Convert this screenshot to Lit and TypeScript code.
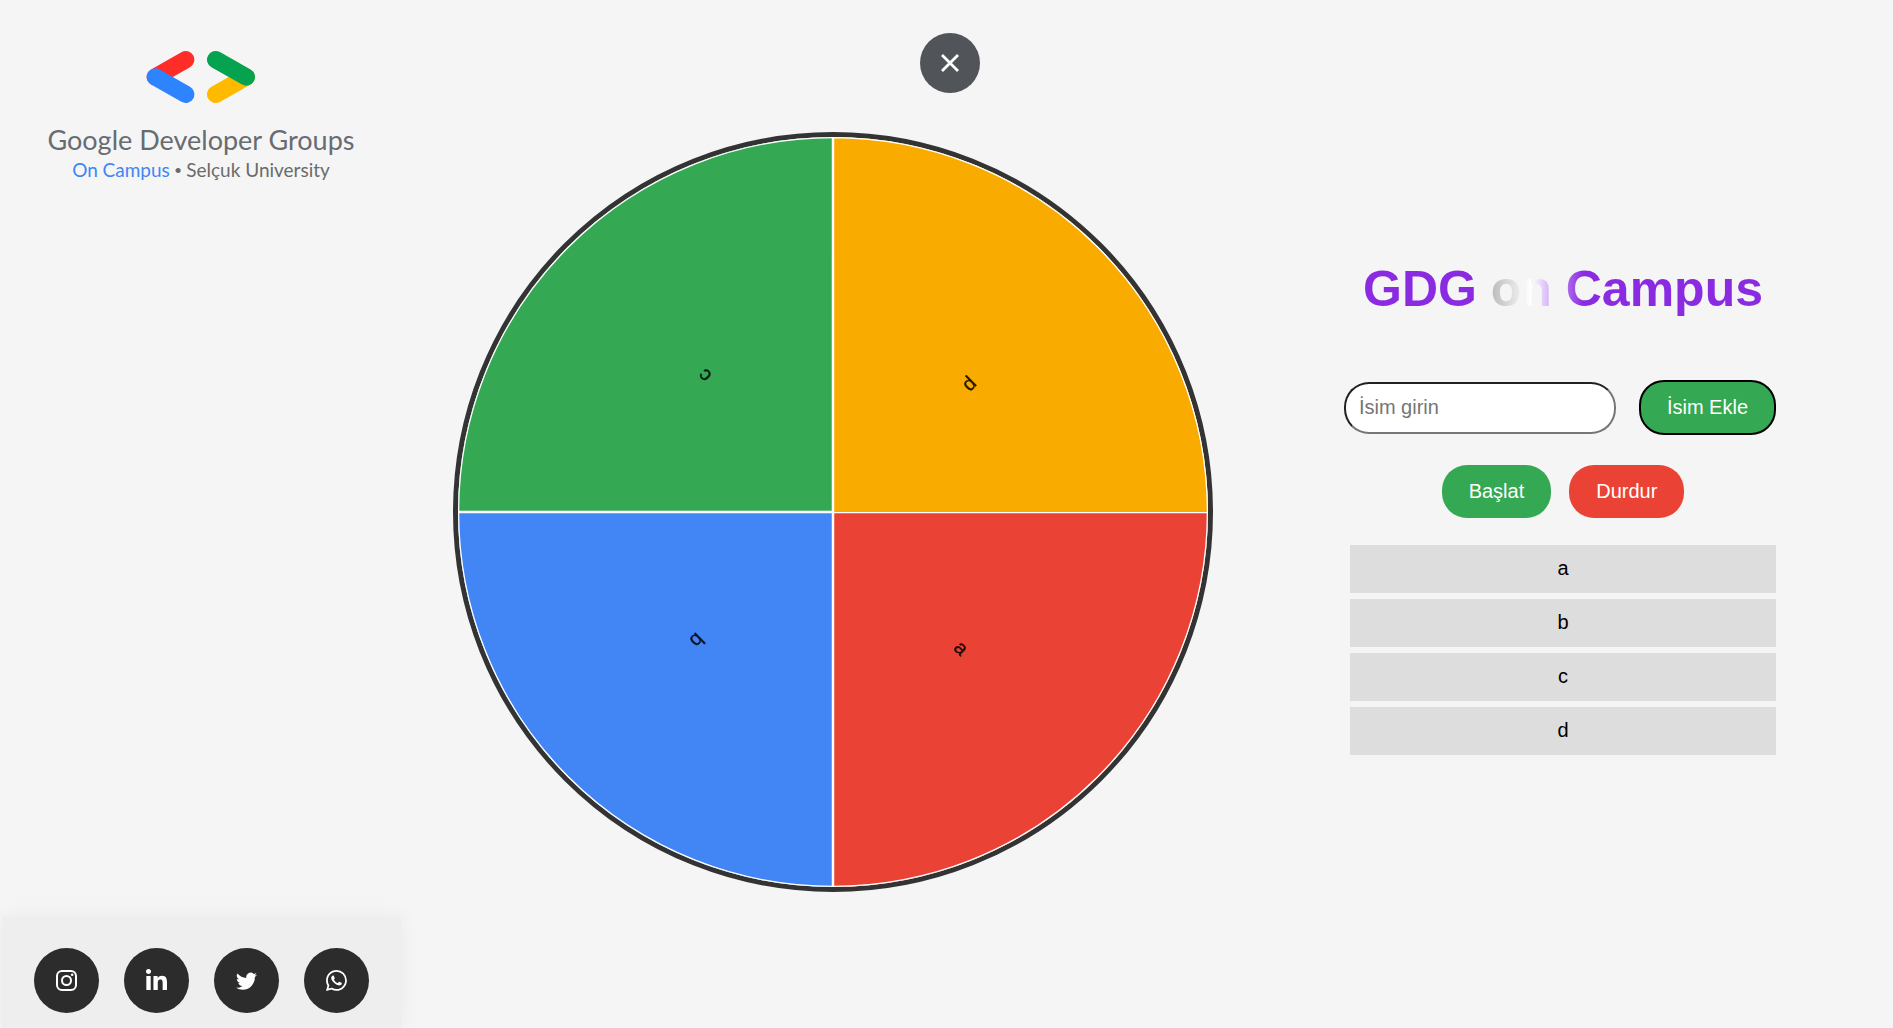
import { LitElement, html, css, svg } from "lit";
import { customElement, property, state } from "lit/decorators.js";

const SLICE_COLORS = ["#ea4335", "#4285f4", "#34a853", "#f9ab00"];

/** Round wheel with one equal slice for each name. */
@customElement("name-wheel")
export class NameWheel extends LitElement {
  @property({ attribute: false }) names: string[] = [];

  static styles = css`
    :host {
      display: block;
    }
    .wheel {
      display: block;
      box-sizing: border-box;
      width: 100%;
      aspect-ratio: 1;
      border: 5px solid #333;
      border-radius: 50%;
      overflow: hidden;
    }
    .edge {
      fill: none;
      stroke: #fff;
      stroke-width: 2.5;
    }
    .label {
      font-family: "Liberation Sans", Arial, sans-serif;
      font-size: 20px;
      text-anchor: middle;
      fill: #000;
      stroke: #000;
      stroke-width: 0.4;
      opacity: 0.85;
    }
  `;

  private slice(name: string, i: number) {
    const c = 375;
    const step = (2 * Math.PI) / this.names.length;
    const point = (angle: number) =>
      `${c + c * Math.cos(angle)} ${c + c * Math.sin(angle)}`;
    const from = point(i * step);
    const to = point((i + 1) * step);
    const large = step > Math.PI ? 1 : 0;
    const outline = `M${c} ${c} L${from} A${c} ${c} 0 ${large} 1 ${to}`;
    return svg`
      <path d="${outline} Z" fill=${SLICE_COLORS[i % SLICE_COLORS.length]}></path>
      <path class="edge" d=${outline}></path>`;
  }

  private label(name: string, i: number) {
    const degrees = ((i + 0.5) * 360) / this.names.length;
    return svg`<text class="label" x="187" y="12"
      transform="translate(375 375) rotate(${degrees})">${name}</text>`;
  }

  render() {
    return html`<svg class="wheel" viewBox="0 0 750 750" role="img" aria-label="Çark">
      ${this.names.map((n, i) => this.slice(n, i))}
      ${this.names.map((n, i) => this.label(n, i))}
    </svg>`;
  }
}

@customElement("app-root")
export class AppRoot extends LitElement {
  @state() private names = ["a", "b", "c", "d"];

  static styles = css`
    :host {
      display: block;
      font-family: "Liberation Sans", Arial, sans-serif;
      font-size: 20px;
      color: #000;
      background: #f5f5f5;
    }
    .page {
      display: grid;
      grid-template-columns: 402px minmax(0, 862fr) minmax(0, 629fr);
      grid-template-rows: auto 1fr;
      height: 100vh;
      min-height: 900px;
      overflow: hidden;
    }
    .top {
      grid-area: 1 / 1 / 2 / 4;
      display: flex;
      justify-content: center;
      padding: 33px 0 39px 7px;
    }
    .close {
      display: grid;
      place-items: center;
      width: 60px;
      height: 60px;
      padding: 0;
      border: 0;
      border-radius: 50%;
      background: #515459;
      cursor: pointer;
    }
    .side {
      grid-area: 1 / 1 / 3 / 2;
      display: flex;
      flex-direction: column;
      justify-content: space-between;
    }
    .brand {
      display: flex;
      flex-direction: column;
      align-items: center;
      padding-top: 50px;
      font-family: Lato, "Open Sans", sans-serif;
      white-space: nowrap;
    }
    .brand-name {
      margin-top: 18px;
      font-size: 27px;
      line-height: 36px;
      color: #676c72;
    }
    .brand-place {
      font-size: 19px;
      line-height: 24px;
      color: #6b6b6b;
    }
    .brand-campus {
      color: #4285f4;
    }
    .brand-dot {
      font-family: "Liberation Sans", Arial, sans-serif;
    }
    .social {
      display: flex;
      gap: 25px;
      width: max-content;
      margin-left: 2px;
      padding: 31px 32px 15px;
      background: #eee;
      box-shadow: 0 0 20px rgba(0, 0, 0, 0.05);
    }
    .social-link {
      display: grid;
      place-items: center;
      width: 65px;
      height: 65px;
      border-radius: 50%;
      background: #2c2c2c;
      color: #fff;
    }
    .wheel-area {
      grid-area: 2 / 2 / 3 / 3;
      display: flex;
      justify-content: center;
      align-items: flex-start;
    }
    .wheel-box {
      width: min(100%, 760px);
    }
    .panel {
      grid-area: 2 / 3 / 3 / 4;
      display: flex;
      flex-direction: column;
      align-items: center;
      padding: 128px 31px 0 0;
    }
    .title {
      margin: 0 0 62px;
      font-size: 50px;
      line-height: 58px;
      font-weight: bold;
      white-space: nowrap;
      color: transparent;
      background: linear-gradient(
        90deg,
        #8a2be2 29%,
        #b4b4b4 31%,
        #fff 42%,
        #8a2be2 55%
      );
      -webkit-background-clip: text;
      background-clip: text;
    }
    .controls {
      display: flex;
      flex-direction: column;
      width: 426px;
      max-width: 100%;
    }
    .add {
      display: flex;
      justify-content: flex-end;
      align-items: center;
      gap: 23px;
      margin-bottom: 30px;
    }
    .field {
      box-sizing: border-box;
      width: 272px;
      height: 52px;
      flex: none;
      padding: 0 13px;
      border: 2px inset #767676;
      border-radius: 25px;
      background: #fff;
      font: inherit;
    }
    .field::placeholder {
      color: #757575;
    }
    .btn {
      padding: 15px 27px;
      border: 0;
      border-radius: 25px;
      font: inherit;
      line-height: 23px;
      color: #fff;
      cursor: pointer;
      white-space: nowrap;
    }
    .go {
      background: #34a853;
    }
    .halt {
      background: #ea4335;
    }
    .outlined {
      padding: 14px 26px;
      border: 2px solid #000;
    }
    .actions {
      display: flex;
      justify-content: center;
      gap: 18px;
      margin-bottom: 27px;
    }
    .names {
      display: flex;
      flex-direction: column;
      gap: 6px;
      margin: 0;
      padding: 0;
      list-style: none;
    }
    .name {
      padding: 12px 12px 13px;
      line-height: 23px;
      text-align: center;
      background: #ddd;
    }
  `;

  private add(e: Event) {
    e.preventDefault();
    const field = this.renderRoot.querySelector<HTMLInputElement>(".field");
    const value = field?.value.trim();
    if (field && value) {
      this.names = [...this.names, value];
      field.value = "";
    }
  }

  private brand() {
    return html`<div class="brand">
      <svg width="110" height="54" viewBox="378 60 330 162" fill="none"
        stroke-width="52" stroke-linecap="round" aria-hidden="true">
        <path d="M406 141 L497 89" stroke="#ff2d27"></path>
        <path d="M406 141 L497 193" stroke="#2e84ff"></path>
        <path d="M679 141 L587 193" stroke="#ffba00"></path>
        <path d="M587 89 L679 141" stroke="#05a350"></path>
      </svg>
      <div class="brand-name">Google Developer Groups</div>
      <div class="brand-place">
        <span class="brand-campus">On Campus</span>
        <span class="brand-dot">•</span> Selçuk University
      </div>
    </div>`;
  }

  private social() {
    return html`<nav class="social">
      <a class="social-link" href="#instagram" aria-label="Instagram">
        <svg width="21" height="21" viewBox="0 0 21 21" fill="none" stroke="currentColor" stroke-width="2">
          <rect x="1" y="1" width="19" height="19" rx="5"></rect>
          <circle cx="10.5" cy="10.5" r="4.5"></circle>
          <circle cx="16.2" cy="4.8" r="1.3" fill="currentColor" stroke="none"></circle>
        </svg>
      </a>
      <a class="social-link" href="#linkedin" aria-label="LinkedIn">
        <svg width="21" height="24" viewBox="0 0 448 512" fill="currentColor">
          <path d="M100.28 448H7.4V148.9h92.88zM53.79 108.1C24.09 108.1 0 83.5 0 53.8a53.79 53.79 0 0 1 107.58 0c0 29.7-24.1 54.3-53.79 54.3zM447.9 448h-92.68V302.4c0-34.7-.7-79.2-48.29-79.2-48.29 0-55.69 37.7-55.69 76.7V448h-92.78V148.9h89.08v40.8h1.3c12.4-23.5 42.69-48.3 87.88-48.3 94 0 111.28 61.9 111.28 142.3V448z"></path>
        </svg>
      </a>
      <a class="social-link" href="#twitter" aria-label="Twitter">
        <svg width="21" height="21" viewBox="0 0 16 16" fill="currentColor">
          <path d="M5.026 15c6.038 0 9.341-5.003 9.341-9.334 0-.14 0-.282-.006-.422A6.685 6.685 0 0 0 16 3.542a6.658 6.658 0 0 1-1.889.518 3.301 3.301 0 0 0 1.447-1.817 6.533 6.533 0 0 1-2.087.793A3.286 3.286 0 0 0 7.875 6.03a9.325 9.325 0 0 1-6.767-3.429 3.289 3.289 0 0 0 1.018 4.382A3.323 3.323 0 0 1 .64 6.575v.045a3.288 3.288 0 0 0 2.632 3.218 3.203 3.203 0 0 1-.865.115 3.23 3.23 0 0 1-.614-.057 3.283 3.283 0 0 0 3.067 2.277A6.588 6.588 0 0 1 .78 13.58a6.32 6.32 0 0 1-.78-.045A9.344 9.344 0 0 0 5.026 15z"></path>
        </svg>
      </a>
      <a class="social-link" href="#whatsapp" aria-label="WhatsApp">
        <svg width="21" height="21" viewBox="0 0 16 16" fill="currentColor">
          <path d="M13.601 2.326A7.854 7.854 0 0 0 7.994 0C3.627 0 .068 3.558.064 7.926c0 1.399.366 2.76 1.057 3.965L0 16l4.204-1.102a7.933 7.933 0 0 0 3.79.965h.004c4.368 0 7.926-3.558 7.93-7.93A7.898 7.898 0 0 0 13.6 2.326zM7.994 14.521a6.573 6.573 0 0 1-3.356-.92l-.24-.144-2.494.654.666-2.433-.156-.251a6.56 6.56 0 0 1-1.007-3.505c0-3.626 2.957-6.584 6.591-6.584a6.56 6.56 0 0 1 4.66 1.931 6.557 6.557 0 0 1 1.928 4.66c-.004 3.639-2.961 6.592-6.592 6.592zm3.615-4.934c-.197-.099-1.17-.578-1.353-.646-.182-.065-.315-.099-.445.099-.133.197-.513.646-.627.775-.114.133-.232.148-.43.05-.197-.1-.836-.308-1.592-.985-.59-.525-.985-1.175-1.103-1.372-.114-.198-.011-.304.088-.403.087-.088.197-.232.296-.346.1-.114.133-.198.198-.33.065-.134.034-.248-.015-.347-.05-.099-.445-1.076-.612-1.47-.16-.389-.323-.335-.445-.34-.114-.007-.247-.007-.38-.007a.729.729 0 0 0-.529.247c-.182.198-.691.677-.691 1.654 0 .977.71 1.916.81 2.049.098.133 1.394 2.132 3.383 2.992.47.205.84.326 1.129.418.475.152.904.129 1.246.08.38-.058 1.171-.48 1.338-.943.164-.464.164-.86.114-.943-.049-.084-.182-.133-.38-.232z"></path>
        </svg>
      </a>
    </nav>`;
  }

  render() {
    return html`<main class="page">
      <div class="top">
        <button class="close" type="button" aria-label="Kapat">
          <svg width="18" height="18" viewBox="0 0 18 18" fill="none" stroke="#fff"
            stroke-width="2.8" aria-hidden="true">
            <path d="M1 1 L17 17 M17 1 L1 17"></path>
          </svg>
        </button>
      </div>
      <div class="side">${this.brand()} ${this.social()}</div>
      <div class="wheel-area">
        <name-wheel class="wheel-box" .names=${this.names}></name-wheel>
      </div>
      <section class="panel">
        <h1 class="title">GDG on Campus</h1>
        <div class="controls">
          <form class="add" @submit=${this.add}>
            <input class="field" type="text" placeholder="İsim girin" aria-label="İsim girin" />
            <button class="btn go outlined" type="submit">İsim Ekle</button>
          </form>
          <div class="actions">
            <button class="btn go" type="button">Başlat</button>
            <button class="btn halt" type="button">Durdur</button>
          </div>
          <ul class="names">
            ${this.names.map((n) => html`<li class="name">${n}</li>`)}
          </ul>
        </div>
      </section>
    </main>`;
  }
}
